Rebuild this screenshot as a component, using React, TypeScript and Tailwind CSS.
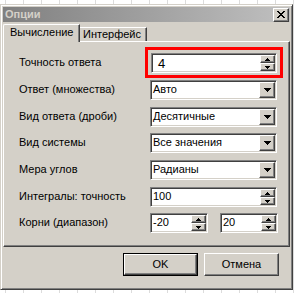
import React from "react";

const raised =
  "border border-t-white border-l-white border-r-[#404040] border-b-[#404040] shadow-[inset_-1px_-1px_0_#808080]";
const sunken =
  "border border-t-[#808080] border-l-[#808080] border-r-white border-b-white shadow-[inset_1px_1px_0_#404040,inset_-1px_-1px_0_#d4d0c8]";

function DownTri() {
  return (
    <svg width="7" height="4" viewBox="0 0 7 4" shapeRendering="crispEdges">
      <polygon points="0,0 7,0 3.5,4" fill="#000" />
    </svg>
  );
}

function SmallTri({ up }: { up?: boolean }) {
  return (
    <svg width="5" height="3" viewBox="0 0 5 3" shapeRendering="crispEdges">
      {up ? (
        <polygon points="2.5,0 5,3 0,3" fill="#000" />
      ) : (
        <polygon points="0,0 5,0 2.5,3" fill="#000" />
      )}
    </svg>
  );
}

function Combo({ value }: { value: string }) {
  return (
    <div className={`${sunken} p-[1px] bg-white h-[20px] w-[127px] flex items-center`}>
      <span className="flex-1 pl-[1px] pb-[2px] text-black">{value}</span>
      <div className={`${raised} bg-[#d4d0c8] w-[16px] h-[16px] flex items-center justify-center`}>
        <DownTri />
      </div>
    </div>
  );
}

function Spin({ value, w, pad }: { value: string; w: string; pad?: string }) {
  return (
    <div className={`${sunken} p-[1px] bg-white h-[20px] ${w} flex items-center`}>
      <span className={`flex-1 ${pad ?? "pl-[1px] pb-[2px]"} text-black`}>{value}</span>
      <div className="flex flex-col w-[15px] h-[16px]">
        <div className={`${raised} bg-[#d4d0c8] h-[8px] flex items-center justify-center`}>
          <SmallTri up />
        </div>
        <div className={`${raised} bg-[#d4d0c8] h-[8px] flex items-center justify-center`}>
          <SmallTri />
        </div>
      </div>
    </div>
  );
}

const rows: { label: string; mt: string; ctrl: React.ReactNode }[] = [
  {
    label: "Точность ответа",
    mt: "mt-[11px]",
    ctrl: (
      <div className="relative ml-[1px] w-[126px]">
        <Spin value="4" w="w-[126px]" pad="pl-[5px] text-[13px]" />
        <div className="absolute -left-[6px] -top-[6px] -right-[6px] -bottom-[5px] border-[3px] border-[#ff0000]" />
      </div>
    ),
  },
  { label: "Ответ (множества)", mt: "mt-[7px]", ctrl: <Combo value="Авто" /> },
  { label: "Вид ответа (дроби)", mt: "mt-[7px]", ctrl: <Combo value="Десятичные" /> },
  { label: "Вид системы", mt: "mt-[6px]", ctrl: <Combo value="Все значения" /> },
  { label: "Мера углов", mt: "mt-[7px]", ctrl: <Combo value="Радианы" /> },
  { label: "Интегралы: точность", mt: "mt-[7px]", ctrl: <Spin value="100" w="w-[127px]" /> },
  {
    label: "Корни (диапазон)",
    mt: "mt-[6px]",
    ctrl: (
      <div className="flex gap-[12px]">
        <Spin value="-20" w="w-[58px]" />
        <Spin value="20" w="w-[58px]" />
      </div>
    ),
  },
];

export default function App() {
  return (
    <div className="w-[297px] h-[293px] bg-white bg-[repeating-linear-gradient(90deg,#dcdcdc_0_1px,transparent_1px_18px)] bg-[position:5px_0] overflow-hidden font-['Liberation_Sans',Arial,sans-serif] text-[11px] leading-none text-black flex flex-col">
      <div className="h-[4px]" />
      <div className="flex">
        <div className="w-[293px] h-[286px] bg-[#d4d0c8] border border-t-[#d4d0c8] border-l-[#d4d0c8] border-r-[#404040] border-b-[#404040] shadow-[inset_1px_1px_0_#ffffff,inset_-1px_-1px_0_#808080] p-[2px] flex flex-col">
          {/* title bar */}
          <div className="h-[15px] bg-[linear-gradient(90deg,#808080,#c0c0c0)] flex items-center justify-between pl-[2px] pr-[1px]">
            <span className="font-bold text-[#d4d0c8] text-[11px]">Опции</span>
            <div className={`${raised} bg-[#d4d0c8] w-[16px] h-[14px] flex items-center justify-center`}>
              <svg width="8" height="7" viewBox="0 0 8 7" shapeRendering="crispEdges">
                <path d="M0 0h2l2 2.5L6 0h2L5 3.5 8 7H6L4 4.5 2 7H0l3-3.5z" fill="#000" />
              </svg>
            </div>
          </div>
          {/* tabs */}
          <div className="h-[19px] flex items-end relative z-10">
            <div className="h-[18px] -mb-[1px] w-[77px] bg-[#d4d0c8] border-t border-l border-t-white border-l-white border-r border-r-[#404040] shadow-[inset_-1px_0_0_#808080] rounded-tl-[2px] flex items-center pl-[6px] pb-[2px]">
              Вычисление
            </div>
            <div className="h-[14px] w-[67px] bg-[#d4d0c8] border-t border-t-white border-r border-r-[#404040] shadow-[inset_-1px_0_0_#808080] flex items-center pl-[3px]">
              Интерфейс
            </div>
          </div>
          {/* panel */}
          <div className="h-[206px] border border-t-white border-l-white border-r-[#404040] border-b-[#404040] shadow-[inset_-1px_-1px_0_#808080] flex flex-col pl-[15px]">
            {rows.map((r) => (
              <div key={r.label} className={`${r.mt} h-[20px] grid grid-cols-[131px_128px] items-center`}>
                <span className="pb-[2px]">{r.label}</span>
                <div>{r.ctrl}</div>
              </div>
            ))}
          </div>
          {/* buttons */}
          <div className="mt-[6px] flex justify-end gap-[6px] pr-[11px]">
            <div className="w-[75px] h-[23px] border border-black">
              <div className={`${raised} bg-[#d4d0c8] w-full h-full flex items-center justify-center`}>OK</div>
            </div>
            <div className={`${raised} bg-[#d4d0c8] w-[75px] h-[23px] flex items-center justify-center`}>Отмена</div>
          </div>
        </div>
        <div className="w-[4px]" />
      </div>
    </div>
  );
}
